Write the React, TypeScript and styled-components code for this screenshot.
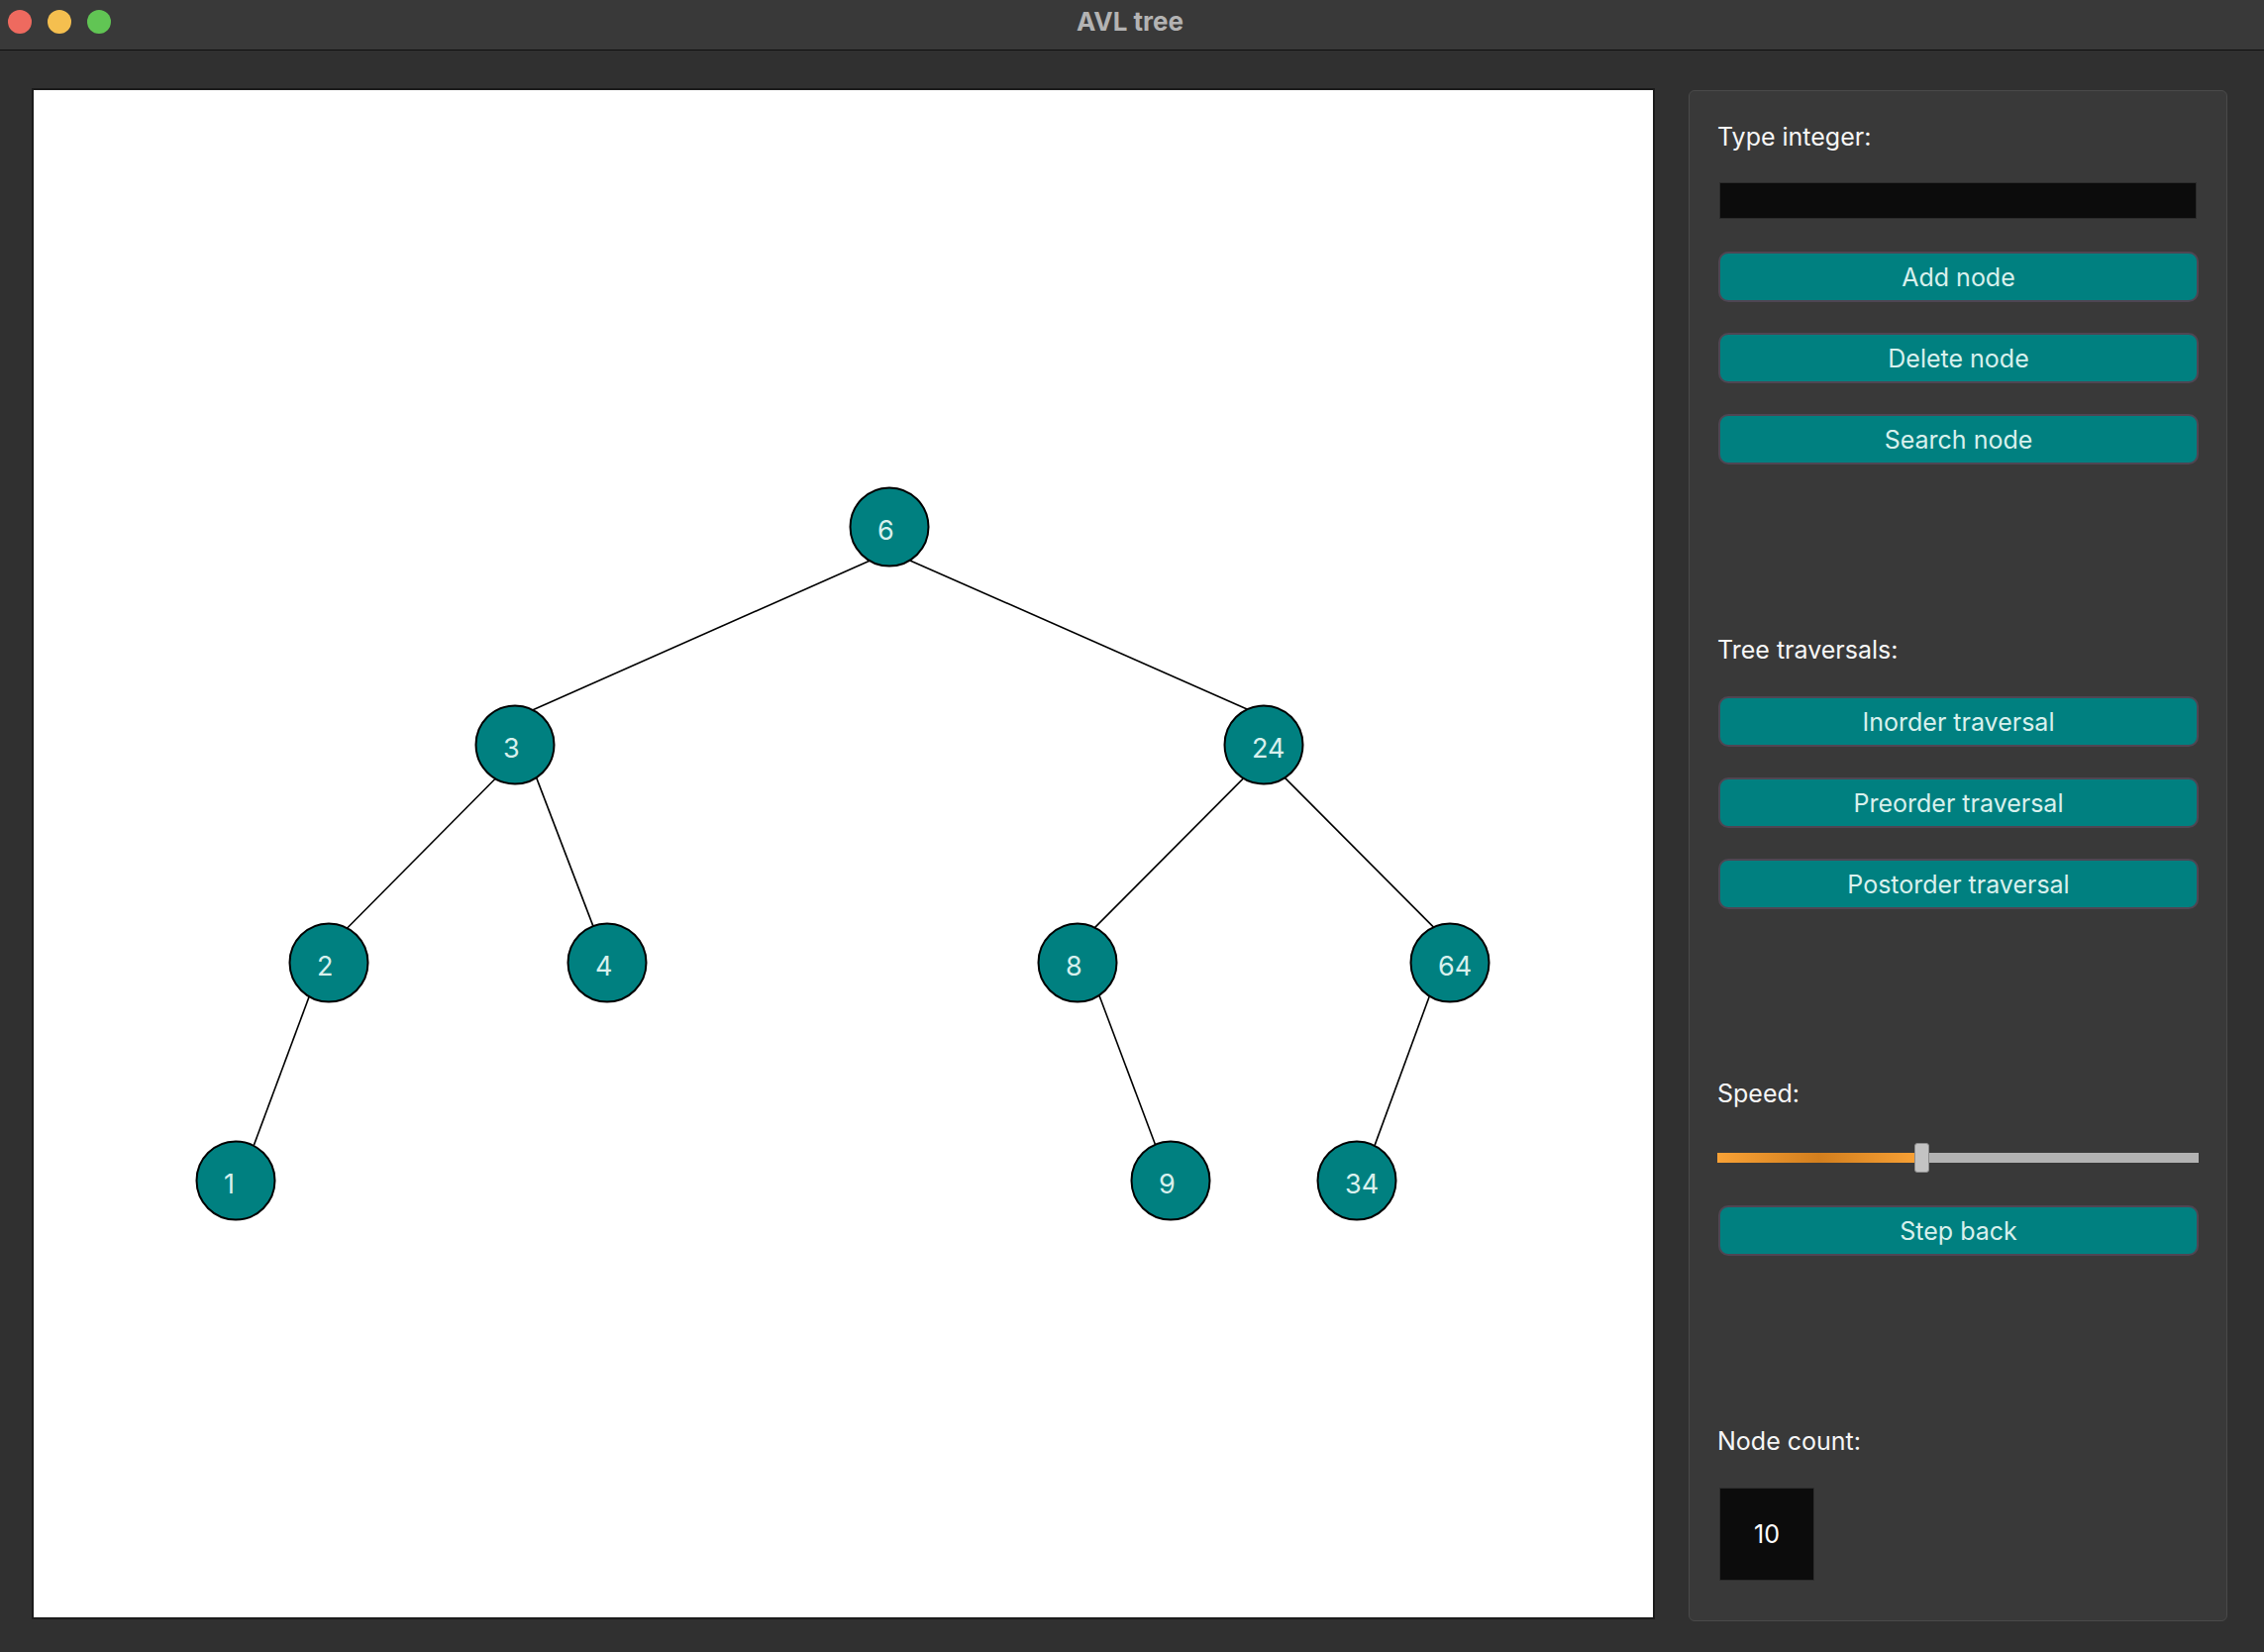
import React from 'react';
import styled, { createGlobalStyle } from 'styled-components';

const GlobalStyle = createGlobalStyle`
  html, body {
    margin: 0;
    padding: 0;
    background: #303030;
  }
  body {
    width: 2286px;
    height: 1668px;
    overflow: hidden;
    font-family: Inter, "Noto Sans", "Liberation Sans", sans-serif;
  }
  #root {
    width: 100%;
    height: 100%;
  }
`;

const Window = styled.div`
  width: 2286px;
  height: 1668px;
  display: flex;
  flex-direction: column;
  background: #303030;
`;

const TitleBar = styled.header`
  height: 43px;
  padding-bottom: 7px;
  flex: 0 0 auto;
  display: grid;
  grid-template-columns: 1fr auto 1fr;
  align-items: center;
  background: #393939;
  border-bottom: 1px solid #111111;
`;

const Lights = styled.div`
  display: flex;
  gap: 16px;
  padding-left: 8px;
`;

const Light = styled.span<{ $c: string }>`
  width: 24px;
  height: 24px;
  border-radius: 50%;
  background: ${(p) => p.$c};
`;

const Title = styled.h1`
  margin: 0 4px 0 0;
  font-size: 26px;
  font-weight: 700;
  color: #b3b3b3;
`;

const Body = styled.main`
  flex: 1;
  min-height: 0;
  display: flex;
  gap: 34px;
  padding: 38px 37px 33px 32px;
`;

const Canvas = styled.section`
  flex: 0 0 1639px;
  box-sizing: border-box;
  background: #ffffff;
  border: 2px solid #1b1b1b;
  overflow: hidden;
`;

const TreeSvg = styled.svg`
  display: block;
  width: 100%;
  height: 100%;
`;

const Panel = styled.aside`
  flex: 0 0 544px;
  box-sizing: border-box;
  margin-top: 2px;
  margin-bottom: -2px;
  background: #393939;
  border: 1px solid #4a4a4a;
  border-radius: 6px;
  display: flex;
  flex-direction: column;
  padding: 31px 28px 0 28px;
`;

const Label = styled.div<{ $mt?: number }>`
  margin-top: ${(p) => p.$mt ?? 0}px;
  font-size: 25px;
  line-height: 30px;
  color: #f6f6f6;
`;

const IntInput = styled.input`
  margin: 31px 2px 0 2px;
  height: 37px;
  box-sizing: border-box;
  background: #0c0c0c;
  border: 1px solid #2c2c2c;
  outline: none;
  color: #ffffff;
  font-family: inherit;
  font-size: 22px;
  padding: 0 8px;
`;

const ActionButton = styled.button<{ $mt: number }>`
  margin: ${(p) => p.$mt}px 0 0 1px;
  height: 51px;
  box-sizing: border-box;
  background: #008080;
  border: 2px solid #4f4653;
  border-radius: 10px;
  color: #d8f0ed;
  font-family: inherit;
  font-size: 25px;
  cursor: pointer;
`;

const SliderBox = styled.div`
  position: relative;
  margin-top: 35px;
  height: 30px;
  display: flex;
  align-items: center;
`;

const Groove = styled.div`
  flex: 1;
  height: 10px;
  background: #b3b3b3;
  display: flex;
`;

const GrooveFill = styled.div`
  height: 100%;
  background: linear-gradient(to right, #f9a236 0%, #d37f1e 50%, #f9a236 100%);
`;

const Thumb = styled.div`
  position: absolute;
  top: 0;
  width: 15px;
  height: 30px;
  box-sizing: border-box;
  background: #c3c3c3;
  border: 1px solid #8c8c8c;
  border-radius: 3px;
`;

const CountBox = styled.div`
  margin: 32px 0 0 2px;
  width: 96px;
  height: 94px;
  box-sizing: border-box;
  background: #0c0c0c;
  border: 1px solid #2e2e2e;
  display: flex;
  align-items: center;
  justify-content: center;
  color: #ffffff;
  font-size: 25px;
`;

type Node = { v: string; x: number; y: number };

const nodes: Node[] = [
  { v: '6', x: 898, y: 532 },
  { v: '3', x: 520, y: 752 },
  { v: '24', x: 1276, y: 752 },
  { v: '2', x: 332, y: 972 },
  { v: '4', x: 613, y: 972 },
  { v: '8', x: 1088, y: 972 },
  { v: '64', x: 1464, y: 972 },
  { v: '1', x: 238, y: 1192 },
  { v: '9', x: 1182, y: 1192 },
  { v: '34', x: 1370, y: 1192 },
];

const edges: [number, number, number, number][] = [
  [876.7, 566.7, 540.5, 715.7],
  [920.7, 566.7, 1259, 715.9],
  [499, 787.3, 352, 935.7],
  [542.2, 786.7, 598.5, 934],
  [312, 1006.7, 256.8, 1155],
  [1255.4, 786, 1107, 935],
  [1298, 786, 1446.4, 935],
  [1110, 1005.3, 1166, 1154.3],
  [1442.9, 1007, 1388.6, 1155],
];

const extend = ([x1, y1, x2, y2]: [number, number, number, number], d: number) => {
  const len = Math.hypot(x2 - x1, y2 - y1);
  const ux = (x2 - x1) / len;
  const uy = (y2 - y1) / len;
  return [x1 - ux * d, y1 - uy * d, x2 + ux * d, y2 + uy * d];
};

const SPEED = 0.424;

export default function App() {
  return (
    <Window>
      <GlobalStyle />
      <TitleBar>
        <Lights>
          <Light $c="#ee6a5f" />
          <Light $c="#f5bf4f" />
          <Light $c="#61c554" />
        </Lights>
        <Title>AVL tree</Title>
        <div />
      </TitleBar>
      <Body>
        <Canvas>
          <TreeSvg viewBox="34 91 1635 1542" preserveAspectRatio="none">
            {edges.map((e, i) => {
              const [a, b, c, d] = extend(e, 10);
              return <line key={i} x1={a} y1={b} x2={c} y2={d} stroke="#000" strokeWidth={1.6} />;
            })}
            {nodes.map((n) => (
              <g key={n.v}>
                <circle cx={n.x} cy={n.y} r={39.5} fill="#008080" stroke="#000" strokeWidth={2} />
                <text
                  x={n.x - 12}
                  y={n.y + 13}
                  fill="#d8f0ed"
                  fontSize={27}
                  fontFamily="Inter, 'Noto Sans', sans-serif"
                >
                  {n.v}
                </text>
              </g>
            ))}
          </TreeSvg>
        </Canvas>
        <Panel>
          <Label>Type integer:</Label>
          <IntInput type="text" />
          <ActionButton $mt={33}>Add node</ActionButton>
          <ActionButton $mt={31}>Delete node</ActionButton>
          <ActionButton $mt={31}>Search node</ActionButton>

          <Label $mt={172}>Tree traversals:</Label>
          <ActionButton $mt={32}>Inorder traversal</ActionButton>
          <ActionButton $mt={31}>Preorder traversal</ActionButton>
          <ActionButton $mt={31}>Postorder traversal</ActionButton>

          <Label $mt={171}>Speed:</Label>
          <SliderBox>
            <Groove>
              <GrooveFill style={{ width: `${SPEED * 100}%` }} />
            </Groove>
            <Thumb style={{ left: `calc(${SPEED * 100}% - 7.5px)` }} />
          </SliderBox>
          <ActionButton $mt={33}>Step back</ActionButton>

          <Label $mt={172}>Node count:</Label>
          <CountBox>10</CountBox>
        </Panel>
      </Body>
    </Window>
  );
}
